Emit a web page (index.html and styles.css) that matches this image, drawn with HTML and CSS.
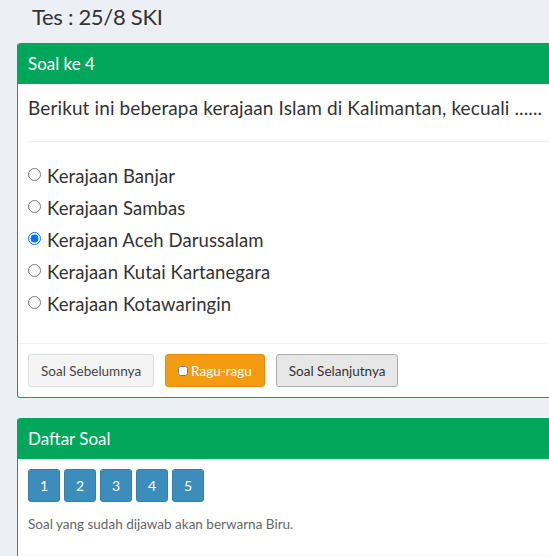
FILE: index.html
```html
<!DOCTYPE html>
<html>
<head>
<meta charset="utf-8">
<link rel="stylesheet" href="styles.css">
</head>
<body>
<div class="wrap">
  <h3 class="page-title">Tes : 25/8 SKI</h3>

  <div class="box">
    <div class="box-header">Soal ke 4</div>
    <div class="box-body">
      <p class="question">Berikut ini beberapa kerajaan Islam di Kalimantan, kecuali ......</p>
      <hr class="sep">
      <div class="options">
        <label class="opt"><input type="radio" name="j"> Kerajaan Banjar</label>
        <label class="opt"><input type="radio" name="j"> Kerajaan Sambas</label>
        <label class="opt"><input type="radio" name="j" checked> Kerajaan Aceh Darussalam</label>
        <label class="opt"><input type="radio" name="j"> Kerajaan Kutai Kartanegara</label>
        <label class="opt"><input type="radio" name="j"> Kerajaan Kotawaringin</label>
      </div>
    </div>
    <div class="box-footer">
      <button class="btn btn-default">Soal Sebelumnya</button>
      <button class="btn btn-warning"><input type="checkbox" class="chk">Ragu-ragu</button>
      <button class="btn btn-active">Soal Selanjutnya</button>
    </div>
  </div>

  <div class="box box-second">
    <div class="box-header">Daftar Soal</div>
    <div class="box-body">
      <div class="nums">
        <button class="btn btn-primary num">1</button>
        <button class="btn btn-primary num">2</button>
        <button class="btn btn-primary num">3</button>
        <button class="btn btn-primary num">4</button>
        <button class="btn btn-primary num">5</button>
      </div>
      <p class="note">Soal yang sudah dijawab akan berwarna Biru.</p>
    </div>
    <div class="box-footer empty"></div>
  </div>
</div>
</body>
</html>
```
FILE: styles.css
```css
html, body {
  margin: 0;
  padding: 0;
  overflow: hidden;
  background: #ecf0f5;
}
body {
  font-family: "Lato", "Liberation Sans", sans-serif;
  color: #333;
}
.wrap {
  width: 900px;
  padding-left: 17px;
}
.page-title {
  margin: 0;
  padding: 2px 0 0 15px;
  font-size: 22px;
  font-weight: 400;
  letter-spacing: -0.3px;
  line-height: 30px;
  height: 41px;
  color: #333;
}
.box {
  background: #fff;
  border: 1px solid #00a65a;
  border-top: none;
  border-radius: 3px;
  margin-bottom: 20px;
}
.box-header {
  background: #00a65a;
  color: #fff;
  height: 41px;
  box-sizing: border-box;
  padding: 0 10px;
  font-size: 17px;
  line-height: 41px;
  border-radius: 3px 3px 0 0;
}
.box-body {
  padding: 10px 10px 0 10px;
}
.question {
  margin: 0;
  font-size: 19px;
  letter-spacing: 0.12px;
  line-height: 28px;
}
.sep {
  margin: 19px 0 0 0;
  border: 0;
  border-top: 1px solid #eee;
}
.options {
  padding: 18px 0 23px 0;
}
.opt {
  display: flex;
  align-items: center;
  height: 32px;
  font-size: 18.5px;
  letter-spacing: 0.1px;
}
.opt input {
  margin: 0 6px 4px 0;
  width: 13px;
  height: 13px;
}
.box-footer {
  border-top: 1px solid #f4f4f4;
  padding: 10px;
  display: flex;
  gap: 11px;
}
.btn {
  height: 33px;
  box-sizing: border-box;
  padding: 0 12px;
  font-family: "Lato", "Liberation Sans", sans-serif;
  font-size: 13.5px;
  border-radius: 3px;
  border: 1px solid #ddd;
  display: inline-flex;
  align-items: center;
  cursor: pointer;
}
.btn-default {
  background: #f4f4f4;
  color: #444;
  border-color: #ddd;
}
.btn-warning {
  background: #f39c12;
  border-color: #e08e0b;
  color: #fff;
  padding-left: 12px;
}
.chk {
  margin: 0 3px 0 0;
  width: 10px;
  height: 10px;
}
.btn-active {
  background: #e7e7e7;
  color: #333;
  border-color: #adadad;
}
.nums {
  display: flex;
  gap: 4px;
}
.num {
  width: 32px;
  justify-content: center;
  padding: 0;
}
.btn-primary {
  background: #3c8dbc;
  border-color: #367fa9;
  color: #fff;
  font-size: 14px;
}
.note {
  margin: 13px 0 0 0;
  font-size: 13.5px;
  color: #666;
  line-height: 18px;
  height: 40px;
}
.box-footer.empty {
  height: 40px;
  box-sizing: border-box;
}
```
